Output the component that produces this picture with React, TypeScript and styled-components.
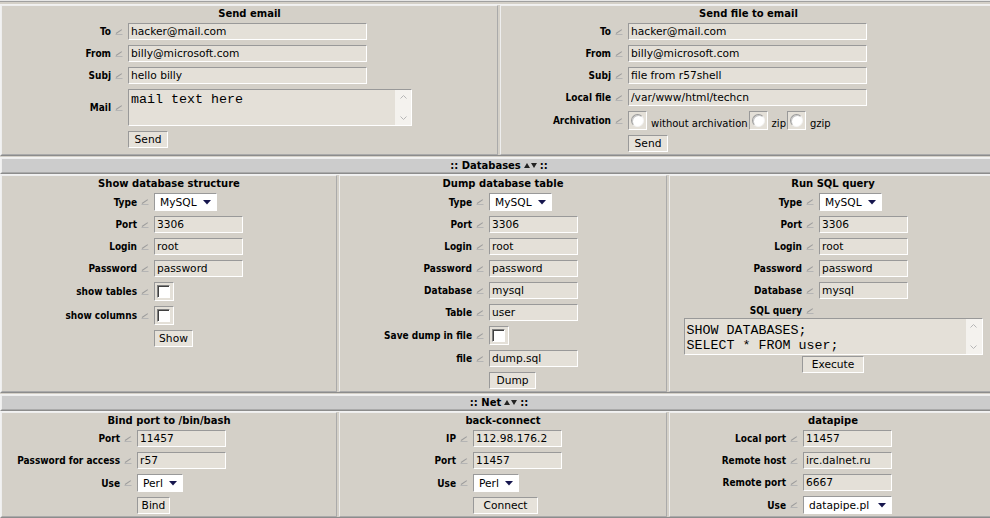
import React from "react";
import styled, { createGlobalStyle } from "styled-components";

const GlobalStyle = createGlobalStyle`
  html, body { margin: 0; padding: 0; background: #d4d0c8; overflow: hidden; }
  body { font-family: "DejaVu Sans", Verdana, sans-serif; }
`;

const Page = styled.div`
  width: 998px;
  display: flex;
  flex-direction: column;
`;

const PrevEdge = styled.div`
  border-top: 1px solid #e6e6e6;
  border-bottom: 1px solid #a0a0a0;
  margin-bottom: 2px;
`;

const Section = styled.div<{ $cols: string; $gapTop?: number }>`
  display: grid;
  grid-template-columns: ${(p) => p.$cols};
  column-gap: 2px;
  border: 1px solid;
  border-color: #f2f2f2 #8c8c8c #8c8c8c #f2f2f2;
  margin-top: ${(p) => p.$gapTop ?? 0}px;
`;

const Panel = styled.div`
  border: 1px solid;
  border-color: #eeeeee #aaaaaa #aaaaaa #eeeeee;
  padding: 1px 0 2px;
  display: flex;
  flex-direction: column;
  min-width: 0;
`;

const Title = styled.div`
  font: bold 10px/14px "DejaVu Sans", Verdana, sans-serif;
  text-align: center;
  color: #000;
  margin-bottom: 2px;
  white-space: nowrap;
`;

const Bar = styled.div`
  border: 1px solid;
  border-color: #eeeeee #aaaaaa #aaaaaa #eeeeee;
  background: #cccccc;
  height: 13px;
  display: flex;
  justify-content: center;
  align-items: center;
  gap: 3px;
  font: bold 10px/13px "DejaVu Sans", Verdana, sans-serif;
  color: #000;
  white-space: pre;
`;

const Form = styled.div<{ $label: number }>`
  display: grid;
  grid-template-columns: ${(p) => p.$label}px 1fr;
  row-gap: 5px;
  align-items: center;
`;

const Label = styled.div`
  display: flex;
  justify-content: flex-end;
  align-items: center;
  gap: 4px;
  padding-right: 5px;
  white-space: nowrap;
  font-family: "DejaVu Sans Condensed", "DejaVu Sans", sans-serif;
  font-stretch: condensed;
  font-weight: bold;
  font-size: 10px;
  line-height: 13px;
  color: #000;
`;

const Cell = styled.div`
  display: flex;
  align-items: center;
  min-width: 0;
`;

const sunken = `
  border: 1px solid;
  border-color: #999999 #ffffff #ffffff #999999;
`;

const TextInput = styled.input<{ $w: number }>`
  box-sizing: border-box;
  width: ${(p) => p.$w}px;
  height: 17px;
  margin: 0;
  padding: 0 2px;
  ${sunken}
  background: #e4e0d8;
  font: 10.67px "DejaVu Sans", Verdana, sans-serif;
  color: #000;
  outline: none;
`;

const Button = styled.button<{ $w: number }>`
  box-sizing: border-box;
  width: ${(p) => p.$w}px;
  height: 17px;
  margin: 0;
  padding: 0;
  ${sunken}
  background: #e6e2da;
  font: 10.67px/15px "DejaVu Sans", Verdana, sans-serif;
  color: #000;
`;

const SelectBox = styled.span<{ $w: number }>`
  box-sizing: border-box;
  width: ${(p) => p.$w}px;
  height: 18px;
  display: flex;
  align-items: center;
  ${sunken}
  background: #ffffff;
  padding-right: 5px;
`;

const SelectEl = styled.select`
  appearance: none;
  -webkit-appearance: none;
  border: 0;
  background: transparent;
  margin: 0;
  padding: 0 0 0 5px;
  flex: 1;
  min-width: 0;
  height: 100%;
  font: 10.67px "DejaVu Sans", Verdana, sans-serif;
  color: #000;
  outline: none;
`;

const CheckFrame = styled.span<{ $w: number }>`
  box-sizing: border-box;
  width: ${(p) => p.$w}px;
  height: 19px;
  display: flex;
  padding: 2px 0 0 2px;
  ${sunken}
  background: #e4e0d8;
  flex: none;
`;

const Check = styled.input`
  appearance: none;
  -webkit-appearance: none;
  margin: 0;
  width: 13px;
  height: 13px;
  box-sizing: border-box;
  background: #ffffff;
  border: 1px solid;
  border-color: #808080 #ffffff #ffffff #808080;
  box-shadow: inset 1px 1px 0 #404040;
`;

const Radio = styled.input`
  appearance: none;
  -webkit-appearance: none;
  margin: 0;
  width: 13px;
  height: 13px;
  box-sizing: border-box;
  border-radius: 50%;
  background: #ffffff;
  border: 1px solid;
  border-color: #9a9a9a #f4f4f4 #f4f4f4 #9a9a9a;
  box-shadow: inset 1px 1px 0 #c8c8c8;
`;

const RadioRow = styled.div`
  display: flex;
  align-items: flex-end;
`;

const RadioText = styled.span`
  font: 10px/12px "DejaVu Sans", Verdana, sans-serif;
  color: #000;
  padding: 0 1px 0 4px;
  white-space: nowrap;
`;

const AreaBox = styled.div<{ $w: number }>`
  box-sizing: border-box;
  width: ${(p) => p.$w}px;
  height: 37px;
  display: flex;
  ${sunken}
  background: #e4e0d8;
`;

const Area = styled.textarea<{ $pt: number }>`
  flex: 1;
  min-width: 0;
  border: 0;
  margin: 0;
  padding: ${(p) => p.$pt}px 2px 0;
  resize: none;
  background: transparent;
  font: 13.33px/15px "Liberation Mono", "Courier New", monospace;
  color: #000;
  overflow: hidden;
  outline: none;
`;

const ScrollTrack = styled.div`
  width: 16px;
  background: #f4f2ee;
  display: flex;
  flex-direction: column;
  justify-content: space-between;
  align-items: center;
  padding: 5px 0;
  box-sizing: border-box;
`;

const Wide = styled.div`
  display: flex;
  flex-direction: column;
  align-items: center;
  gap: 1px;
  margin-top: 1px;
`;

const LabelArrow = () => (
  <svg width="8" height="6" viewBox="0 0 8 6" aria-hidden="true">
    <path d="M1 4.5 L6.8 0.6" stroke="#9c9c9c" strokeWidth="1.1" fill="none" />
    <path d="M0.5 5.5 H7.5" stroke="#b4b4b4" strokeWidth="1" fill="none" />
  </svg>
);

const SortIcon = () => (
  <svg width="13" height="7" viewBox="0 0 13 7" aria-hidden="true">
    <path d="M0 6 L3 1 L6 6 Z" fill="#222" />
    <path d="M7 1 L13 1 L10 6 Z" fill="#222" />
  </svg>
);

const DropArrow = () => (
  <svg width="8" height="5" viewBox="0 0 8 5" aria-hidden="true">
    <path d="M0 0 H8 L4 4.5 Z" fill="#16164e" />
  </svg>
);

const Chevron = ({ up }: { up?: boolean }) => (
  <svg width="7" height="4" viewBox="0 0 7 4" aria-hidden="true">
    <path d={up ? "M0.5 3.5 L3.5 0.5 L6.5 3.5" : "M0.5 0.5 L3.5 3.5 L6.5 0.5"} stroke="#b6b6b6" fill="none" />
  </svg>
);

const Field = ({ label, children }: { label: string; children?: React.ReactNode }) => (
  <>
    <Label>
      {label}
      <LabelArrow />
    </Label>
    <Cell>{children}</Cell>
  </>
);

const ButtonRow = ({ children }: { children: React.ReactNode }) => (
  <>
    <span />
    <Cell>{children}</Cell>
  </>
);

const Text = ({ w, v }: { w: number; v: string }) => <TextInput $w={w} defaultValue={v} />;

const Select = ({ w, v }: { w: number; v: string }) => (
  <SelectBox $w={w}>
    <SelectEl defaultValue={v}>
      <option>{v}</option>
    </SelectEl>
    <DropArrow />
  </SelectBox>
);

const CheckBox = () => (
  <CheckFrame $w={20}>
    <Check type="checkbox" />
  </CheckFrame>
);

const TextArea = ({ w, v, pt }: { w: number; v: string; pt: number }) => (
  <AreaBox $w={w}>
    <Area $pt={pt} defaultValue={v} spellCheck={false} />
    <ScrollTrack>
      <Chevron up />
      <Chevron />
    </ScrollTrack>
  </AreaBox>
);

const DbCommon = ({ w }: { w: number }) => (
  <>
    <Field label="Type">
      <Select w={63} v="MySQL" />
    </Field>
    <Field label="Port">
      <Text w={w} v="3306" />
    </Field>
    <Field label="Login">
      <Text w={w} v="root" />
    </Field>
    <Field label="Password">
      <Text w={w} v="password" />
    </Field>
  </>
);

export default function App() {
  return (
    <Page>
      <GlobalStyle />
      <PrevEdge />

      <Section $cols="497px 1fr">
        <Panel>
          <Title>Send email</Title>
          <Form $label={126}>
            <Field label="To">
              <Text w={239} v="hacker@mail.com" />
            </Field>
            <Field label="From">
              <Text w={239} v="billy@microsoft.com" />
            </Field>
            <Field label="Subj">
              <Text w={239} v="hello billy" />
            </Field>
            <Field label="Mail">
              <TextArea w={284} v="mail text here" pt={2} />
            </Field>
            <ButtonRow>
              <Button $w={40}>Send</Button>
            </ButtonRow>
          </Form>
        </Panel>
        <Panel>
          <Title>Send file to email</Title>
          <Form $label={127}>
            <Field label="To">
              <Text w={239} v="hacker@mail.com" />
            </Field>
            <Field label="From">
              <Text w={239} v="billy@microsoft.com" />
            </Field>
            <Field label="Subj">
              <Text w={239} v="file from r57shell" />
            </Field>
            <Field label="Local file">
              <Text w={239} v="/var/www/html/techcn" />
            </Field>
            <Field label="Archivation">
              <RadioRow>
                <CheckFrame $w={19}>
                  <Radio type="radio" name="arch" />
                </CheckFrame>
                <RadioText>without archivation</RadioText>
                <CheckFrame $w={19}>
                  <Radio type="radio" name="arch" />
                </CheckFrame>
                <RadioText>zip</RadioText>
                <CheckFrame $w={19}>
                  <Radio type="radio" name="arch" />
                </CheckFrame>
                <RadioText>gzip</RadioText>
              </RadioRow>
            </Field>
            <ButtonRow>
              <Button $w={40}>Send</Button>
            </ButtonRow>
          </Form>
        </Panel>
      </Section>

      <Section $cols="1fr" $gapTop={1}>
        <Bar>
          <span>:: Databases</span>
          <SortIcon />
          <span>::</span>
        </Bar>
      </Section>

      <Section $cols="336px 328px 1fr">
        <Panel>
          <Title>Show database structure</Title>
          <Form $label={152}>
            <DbCommon w={89} />
            <Field label="show tables">
              <CheckBox />
            </Field>
            <Field label="show columns">
              <CheckBox />
            </Field>
            <ButtonRow>
              <Button $w={39}>Show</Button>
            </ButtonRow>
          </Form>
        </Panel>
        <Panel>
          <Title>Dump database table</Title>
          <Form $label={149}>
            <DbCommon w={89} />
            <Field label="Database">
              <Text w={89} v="mysql" />
            </Field>
            <Field label="Table">
              <Text w={89} v="user" />
            </Field>
            <Field label="Save dump in file">
              <CheckBox />
            </Field>
            <Field label="file">
              <Text w={89} v="dump.sql" />
            </Field>
            <ButtonRow>
              <Button $w={47}>Dump</Button>
            </ButtonRow>
          </Form>
        </Panel>
        <Panel>
          <Title>Run SQL query</Title>
          <Form $label={149}>
            <DbCommon w={89} />
            <Field label="Database">
              <Text w={89} v="mysql" />
            </Field>
            <Field label="SQL query" />
          </Form>
          <Wide>
            <TextArea w={299} v={"SHOW DATABASES;\nSELECT * FROM user;"} pt={4} />
            <Button $w={62}>Execute</Button>
          </Wide>
        </Panel>
      </Section>

      <Section $cols="1fr" $gapTop={1}>
        <Bar>
          <span>:: Net</span>
          <SortIcon />
          <span>::</span>
        </Bar>
      </Section>

      <Section $cols="336px 328px 1fr">
        <Panel>
          <Title>Bind port to /bin/bash</Title>
          <Form $label={135}>
            <Field label="Port">
              <Text w={89} v="11457" />
            </Field>
            <Field label="Password for access">
              <Text w={89} v="r57" />
            </Field>
            <Field label="Use">
              <Select w={46} v="Perl" />
            </Field>
            <ButtonRow>
              <Button $w={33}>Bind</Button>
            </ButtonRow>
          </Form>
        </Panel>
        <Panel>
          <Title>back-connect</Title>
          <Form $label={133}>
            <Field label="IP">
              <Text w={89} v="112.98.176.2" />
            </Field>
            <Field label="Port">
              <Text w={89} v="11457" />
            </Field>
            <Field label="Use">
              <Select w={46} v="Perl" />
            </Field>
            <ButtonRow>
              <Button $w={65}>Connect</Button>
            </ButtonRow>
          </Form>
        </Panel>
        <Panel>
          <Title>datapipe</Title>
          <Form $label={133}>
            <Field label="Local port">
              <Text w={89} v="11457" />
            </Field>
            <Field label="Remote host">
              <Text w={89} v="irc.dalnet.ru" />
            </Field>
            <Field label="Remote port">
              <Text w={89} v="6667" />
            </Field>
            <Field label="Use">
              <Select w={89} v="datapipe.pl" />
            </Field>
          </Form>
        </Panel>
      </Section>
    </Page>
  );
}
